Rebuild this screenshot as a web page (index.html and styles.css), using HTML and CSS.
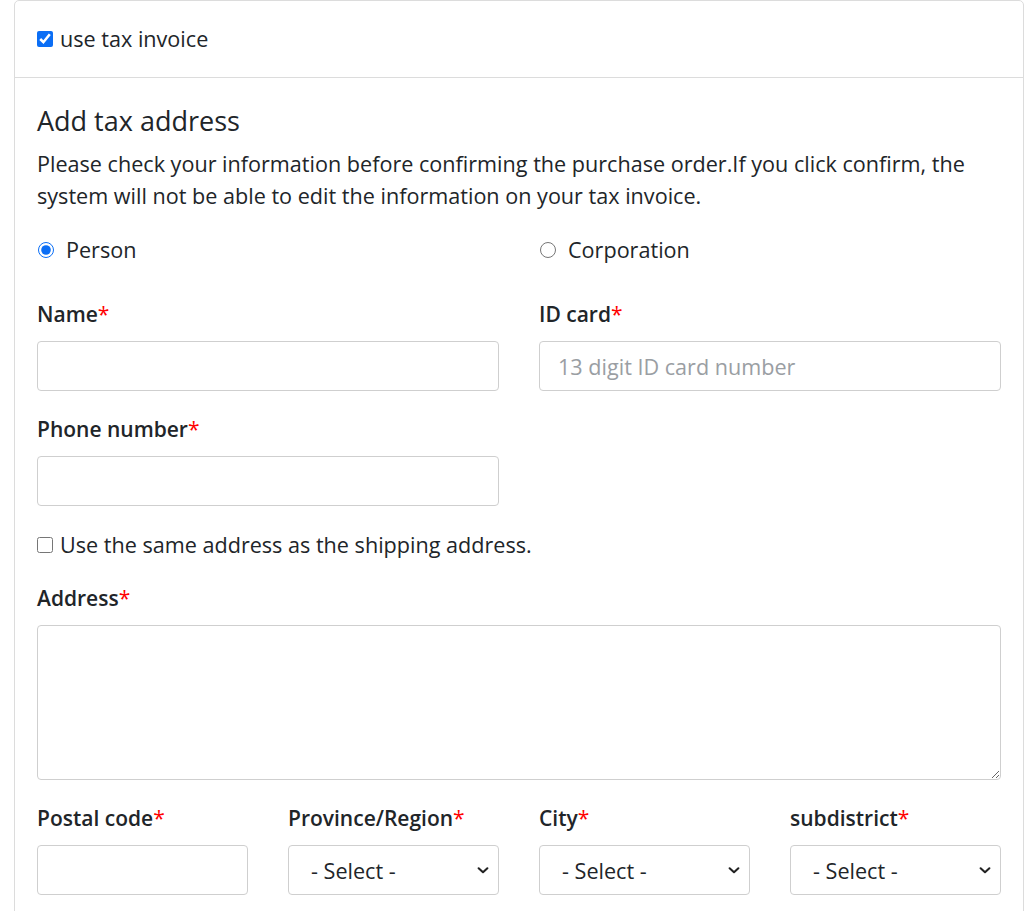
FILE: index.html
```html
<!DOCTYPE html>
<html>
<head>
<meta charset="utf-8">
<link rel="stylesheet" href="styles.css">
</head>
<body>
<div class="card">
  <div class="card-header">
    <label class="check"><input type="checkbox" checked> use tax invoice</label>
  </div>
  <div class="card-body">
    <h4 class="title">Add tax address</h4>
    <p class="note">Please check your information before confirming the purchase order.If you click confirm, the system will not be able to edit the information on your tax invoice.</p>
    <div class="grid2 radios">
      <label class="radio"><input type="radio" name="t" checked> Person</label>
      <label class="radio"><input type="radio" name="t"> Corporation</label>
    </div>
    <div class="grid2">
      <div class="group">
        <label class="lbl">Name<span class="req">*</span></label>
        <input class="ctl" type="text">
      </div>
      <div class="group">
        <label class="lbl">ID card<span class="req">*</span></label>
        <input class="ctl" type="text" placeholder="13 digit ID card number">
      </div>
    </div>
    <div class="grid2">
      <div class="group">
        <label class="lbl">Phone number<span class="req">*</span></label>
        <input class="ctl" type="text">
      </div>
    </div>
    <label class="check same"><input type="checkbox"> Use the same address as the shipping address.</label>
    <div class="group">
      <label class="lbl">Address<span class="req">*</span></label>
      <textarea class="ctl area"></textarea>
    </div>
    <div class="grid4">
      <div class="group">
        <label class="lbl">Postal code<span class="req">*</span></label>
        <input class="ctl" type="text">
      </div>
      <div class="group">
        <label class="lbl">Province/Region<span class="req">*</span></label>
        <select class="ctl sel"><option>- Select -</option></select>
      </div>
      <div class="group">
        <label class="lbl">City<span class="req">*</span></label>
        <select class="ctl sel"><option>- Select -</option></select>
      </div>
      <div class="group">
        <label class="lbl">subdistrict<span class="req">*</span></label>
        <select class="ctl sel"><option>- Select -</option></select>
      </div>
    </div>
  </div>
</div>
</body>
</html>
```
FILE: styles.css
```css
html, body {
  margin: 0;
  padding: 0;
  background: #fff;
}
body {
  font-family: "Open Sans", "Noto Sans", sans-serif;
  font-size: 21.6px;
  line-height: 32px;
  color: #212529;
}
.card {
  margin-left: 14px;
  width: 1010px;
  box-sizing: border-box;
  border: 1px solid #dcdcdc;
  border-radius: 5px;
  background: #fff;
}
.card-header {
  height: 76px;
  border-bottom: 1px solid #dcdcdc;
  padding: 0 22px;
  display: flex;
  align-items: center;
}
.check {
  display: flex;
  align-items: center;
  gap: 7px;
}
.check input {
  width: 16px;
  height: 16px;
  margin: 0;
  accent-color: #0b6ef5;
}
.card-body {
  padding: 27px 22px 20px 22px;
}
.title {
  margin: 0;
  font-size: 27px;
  font-weight: 400;
  line-height: 31px;
}
.note {
  margin: 12px 0 22px 0;
}
.grid2 {
  display: grid;
  grid-template-columns: 1fr 1fr;
  column-gap: 40px;
}
.grid4 {
  display: grid;
  grid-template-columns: repeat(4, 1fr);
  column-gap: 40px;
}
.radios {
  margin-bottom: 32px;
}
.radio {
  display: flex;
  align-items: center;
  gap: 12px;
}
.radio input {
  width: 16px;
  height: 16px;
  margin: 0 0 0 1px;
  accent-color: #0b6ef5;
}
.group {
  margin-bottom: 22px;
}
.lbl {
  display: block;
  font-weight: 600;
  font-size: 21px;
  margin-bottom: 11px;
}
.req {
  color: #f00;
  font-weight: 400;
}
.ctl {
  display: block;
  width: 100%;
  height: 50px;
  box-sizing: border-box;
  border: 1px solid #cfcfcf;
  border-radius: 4px;
  background: #fff;
  font-family: inherit;
  font-size: 21.6px;
  padding: 0 18px;
  color: #212529;
}
.ctl::placeholder {
  color: #9a9ea3;
}
.area {
  height: 155px;
  resize: vertical;
}
.sel {
  appearance: none;
  -webkit-appearance: none;
  padding-left: 22px;
  background-image: url("data:image/svg+xml,%3Csvg xmlns='http://www.w3.org/2000/svg' viewBox='0 0 16 16'%3E%3Cpath fill='none' stroke='%23222' stroke-width='2.4' stroke-linecap='round' stroke-linejoin='round' d='M3 6l5 4.5L13 6'/%3E%3C/svg%3E");
  background-repeat: no-repeat;
  background-position: right 8px center;
  background-size: 14px 14px;
}
.same {
  margin-top: 1px;
  margin-bottom: 21px;
}
```
